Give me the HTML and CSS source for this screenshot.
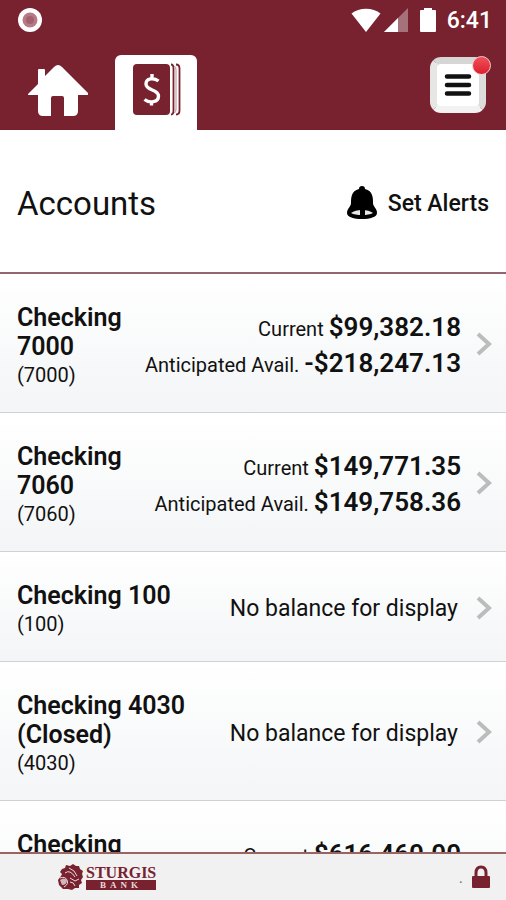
FILE: index.html
```
<!DOCTYPE html>
<html lang="en">
<head>
    <meta charset="UTF-8">
    <meta name="viewport" content="width=device-width, initial-scale=1.0">
    <title>Accounts</title>
    <link rel="stylesheet" href="styles.css">
</head>
<body>
    <header class="header">
        <div class="status-bar">
            <svg class="record" width="26" height="26" viewBox="0 0 26 26" aria-hidden="true">
                <circle cx="13" cy="13" r="12" fill="#fff"/>
                <circle cx="13" cy="13" r="7.500" fill="#b57c86"/>
                <circle cx="13" cy="13" r="4" fill="#a5606d"/>
            </svg>
            <div class="status-icons">
                <svg width="30" height="26" viewBox="0 0 30 26" aria-hidden="true">
                    <path d="M.5 6.500C8 0 22 0 29.500 6.500L15 25z" fill="#fff"/>
                </svg>
                <svg width="26" height="26" viewBox="0 0 26 26" aria-hidden="true">
                    <path d="M25 1v24H1z" fill="#a5717b"/>
                    <path d="M15 11v14H1z" fill="#fff"/>
                </svg>
                <svg class="battery" width="18" height="26" viewBox="0 0 18 26" aria-hidden="true">
                    <path d="M5 1h8v2h3q1 0 1 1v20q0 1-1 1H2q-1 0-1-1V4q0-1 1-1h3z" fill="#fff"/>
                </svg>
                <span class="time">6:41</span>
            </div>
        </div>
        <nav class="nav">
            <a href="#" class="home" aria-label="Home">
                <svg width="60" height="54" viewBox="0 0 60 54">
                    <path d="M0 30L10 20V6q0-1 1-1h5q1 0 1 1v6L26 3q4-4 8 0L60 29q1 2-1 2h-9v16q0 5-5 5h-9V34q0-2-2-2H25q-2 0-2 2v18h-8q-5 0-5-5V31H1q-2 0-1-1z" fill="#fff"/>
                </svg>
            </a>
            <a href="#" class="tab" aria-label="Accounts">
                <svg width="48" height="54" viewBox="0 0 48 54">
                    <rect x="0" y="1" width="37" height="51" rx="4" fill="#78212f"/>
                    <path d="M38 1.500q2.500 0 2.500 4v42q0 4-2.500 4M43 1.500q3.500 0 3.500 4v42q0 4-3.500 4" fill="none" stroke="#78212f" stroke-width="1.800"/>
                    <path d="M41.500 3q1.500 1 1.500 4v39q0 3-1.500 4" fill="none" stroke="#b98890" stroke-width="1"/>
                    <path d="M25.500 18C21 14.500 13 15 13 21c0 7 12.500 5 12.500 12 0 6.500-9 7.500-14 3.500M19 11v5M18.500 37.500v5" fill="none" stroke="#fff" stroke-width="3.400"/>
                </svg>
            </a>
            <button type="button" class="menu" aria-label="Menu">
                <svg width="32" height="40" viewBox="0 0 32 40">
                    <path d="M5 11.500h22M5 20h22M5 28.500h22" stroke="#111" stroke-width="4.500" stroke-linecap="round"/>
                </svg>
                <span class="badge"></span>
            </button>
        </nav>
    </header>

    <div class="title-bar">
        <h1 class="title">Accounts</h1>
        <a href="#" class="alerts">
            <svg width="30" height="34" viewBox="0 0 30 34" aria-hidden="true">
                <path d="M15 0q3 0 3 3c8 2 8 9 8 14 0 4 4 5 4 10 0 4-7 6-15 6S0 31 0 27c0-5 4-6 4-10 0-5 0-12 8-14q0-3 3-3z" fill="#000"/>
                <path d="M4 27q4-3 11-3t11 3q-4 2-11 2T4 27z" fill="#e8e8e8"/>
                <path d="M13 23h5v6h-5z" fill="#000"/>
            </svg>
            Set Alerts
        </a>
    </div>

    <main class="accounts">
        <a href="#" class="account">
            <div class="info">
                <h2 class="name">Checking 7000</h2>
                <p class="number">(7000)</p>
            </div>
            <div class="balances">
                <p>Current <strong>$99,382.18</strong></p>
                <p>Anticipated Avail. <strong>-$218,247.13</strong></p>
            </div>
            <svg class="arrow" width="16" height="24" viewBox="0 0 16 24"><path d="M2 2l11 10-11 10"/></svg>
        </a>
        <a href="#" class="account">
            <div class="info">
                <h2 class="name">Checking 7060</h2>
                <p class="number">(7060)</p>
            </div>
            <div class="balances">
                <p>Current <strong>$149,771.35</strong></p>
                <p>Anticipated Avail. <strong>$149,758.36</strong></p>
            </div>
            <svg class="arrow" width="16" height="24" viewBox="0 0 16 24"><path d="M2 2l11 10-11 10"/></svg>
        </a>
        <a href="#" class="account">
            <div class="info">
                <h2 class="name">Checking 100</h2>
                <p class="number">(100)</p>
            </div>
            <p class="no-balance">No balance for display</p>
            <svg class="arrow" width="16" height="24" viewBox="0 0 16 24"><path d="M2 2l11 10-11 10"/></svg>
        </a>
        <a href="#" class="account">
            <div class="info">
                <h2 class="name">Checking 4030 (Closed)</h2>
                <p class="number">(4030)</p>
            </div>
            <p class="no-balance">No balance for display</p>
            <svg class="arrow" width="16" height="24" viewBox="0 0 16 24"><path d="M2 2l11 10-11 10"/></svg>
        </a>
        <a href="#" class="account">
            <div class="info">
                <h2 class="name">Checking 7090</h2>
                <p class="number">(7090)</p>
            </div>
            <div class="balances">
                <p>Current <strong>$616,460.00</strong></p>
                <p>Anticipated Avail. <strong>$616,460.00</strong></p>
            </div>
            <svg class="arrow" width="16" height="24" viewBox="0 0 16 24"><path d="M2 2l11 10-11 10"/></svg>
        </a>
    </main>

    <footer class="footer">
        <div class="logo">
            <svg width="26" height="26" viewBox="0 0 26 26" aria-hidden="true">
                <path d="M4 5l3-1 1-3 4 1 3-2 3 2 3 0 1 3 3 2-1 3 1 3-2 3 1 3-3 2 0 3-4 0-3 2-4-1-5 0-4-4-1-5 3-4 1-2-2-2z" fill="#78212f"/>
                <path d="M7 9q5-4 10 4M11 4q6 2 8 8M12 18q4 0 5 4M2 14q5-2 7 2t-3 7M12 14l5 3 4-2" fill="none" stroke="#ead9dc" stroke-width="1"/>
                <path d="M2 16q4-3 7 0 0 5-5 5z" fill="#d5b3b9"/>
            </svg>
            <div class="logo-text">
                <span class="logo-name">STURGIS</span>
                <span class="logo-sub">BANK</span>
            </div>
        </div>
        <div class="secure">
            <span class="dot">.</span>
            <svg width="18" height="24" viewBox="0 0 18 24" aria-label="Secure">
                <path d="M4 11V8q0-6 5-6t5 6v3" fill="none" stroke="#78212f" stroke-width="3"/>
                <rect x="0" y="11" width="18" height="12" rx="1" fill="#78212f"/>
            </svg>
        </div>
    </footer>
</body>
</html>
```
FILE: styles.css
```
* {
    margin: 0;
    padding: 0;
    box-sizing: border-box;
}

body {
    font-family: Roboto, "Liberation Sans", Arial, sans-serif;
    background-color: #fff;
    color: #111;
    height: 100vh;
    display: flex;
    flex-direction: column;
    overflow: hidden;
}

a {
    color: inherit;
    text-decoration: none;
}

svg {
    display: block;
    flex-shrink: 0;
}

/* header */
.header {
    background-color: #78212f;
    flex-shrink: 0;
}

.status-bar {
    display: flex;
    justify-content: space-between;
    align-items: center;
    height: 40px;
    padding: 0 14px 0 17px;
}

.status-icons {
    display: flex;
    align-items: center;
    gap: 2px;
}

.battery {
    margin: 0 8px;
}

.time {
    color: #fff;
    font-size: 23px;
    font-weight: 500;
}

.nav {
    display: flex;
    align-items: flex-end;
    height: 90px;
    padding: 0 20px 0 28px;
}

.home {
    margin-bottom: 12px;
}

.tab {
    background-color: #fff;
    border-radius: 6px 6px 0 0;
    padding: 8px 16px 13px 18px;
    margin-left: 27px;
}

.menu {
    position: relative;
    display: flex;
    align-items: center;
    justify-content: center;
    width: 56px;
    height: 56px;
    margin: 0 0 17px auto;
    border: 7px solid #dcdcda;
    border-color: #d6d6d4 #dcdcda #f2f2f2 #e6e6e4;
    border-radius: 11px;
    background-color: #fff;
}

.badge {
    position: absolute;
    top: -8px;
    right: -12px;
    width: 19px;
    height: 19px;
    border: 1px solid #f3c9cd;
    border-radius: 50%;
    background: linear-gradient(#f0505a, #dc1f2e);
}

/* title */
.title-bar {
    display: flex;
    justify-content: space-between;
    align-items: center;
    flex-shrink: 0;
    height: 144px;
    padding: 4px 17px 0;
    border-bottom: 2px solid #946570;
}

.title {
    font-size: 33px;
    font-weight: 400;
}

.alerts {
    display: flex;
    align-items: center;
    gap: 11px;
    font-size: 23px;
    font-weight: 500;
}

/* account list */
.accounts {
    flex: 1;
    min-height: 0;
    overflow: hidden;
}

.account {
    display: flex;
    align-items: center;
    padding: 24px 14px 22px 17px;
    border-bottom: 1px solid #cfd1d3;
    background: linear-gradient(#fff, #f3f5f6);
}

.info {
    flex: 1;
    padding-top: 5px;
}

.name {
    font-size: 25px;
    line-height: 29px;
    font-weight: 600;
}

.number {
    font-size: 20px;
    line-height: 29px;
}

.balances {
    font-size: 20px;
    line-height: 36px;
    padding-top: 5px;
    text-align: right;
    white-space: nowrap;
}

.balances strong {
    font-size: 26px;
    line-height: 30px;
    font-weight: 600;
}

.no-balance {
    font-size: 23px;
    padding-top: 2px;
    white-space: nowrap;
    margin-right: 3px;
}

.arrow {
    margin-left: 15px;
}

.arrow path {
    fill: none;
    stroke: #bcbcbc;
    stroke-width: 4;
}

/* footer */
.footer {
    display: flex;
    justify-content: space-between;
    align-items: center;
    flex-shrink: 0;
    height: 48px;
    padding: 0 16px 0 58px;
    border-top: 2px solid #9a6560;
    background-color: #f1f1f1;
}

.logo {
    display: flex;
    align-items: center;
    gap: 2px;
}

.logo-text {
    display: flex;
    flex-direction: column;
    color: #78212f;
    font-family: "Liberation Serif", serif;
    font-weight: 700;
}

.logo-name {
    font-size: 16px;
    line-height: 15px;
}

.logo-sub {
    background-color: #78212f;
    color: #ead9dc;
    font-size: 9px;
    line-height: 10px;
    letter-spacing: 4px;
    text-align: center;
}

.secure {
    display: flex;
    align-items: center;
    gap: 9px;
}

.dot {
    color: #777;
    font-size: 16px;
}
```
